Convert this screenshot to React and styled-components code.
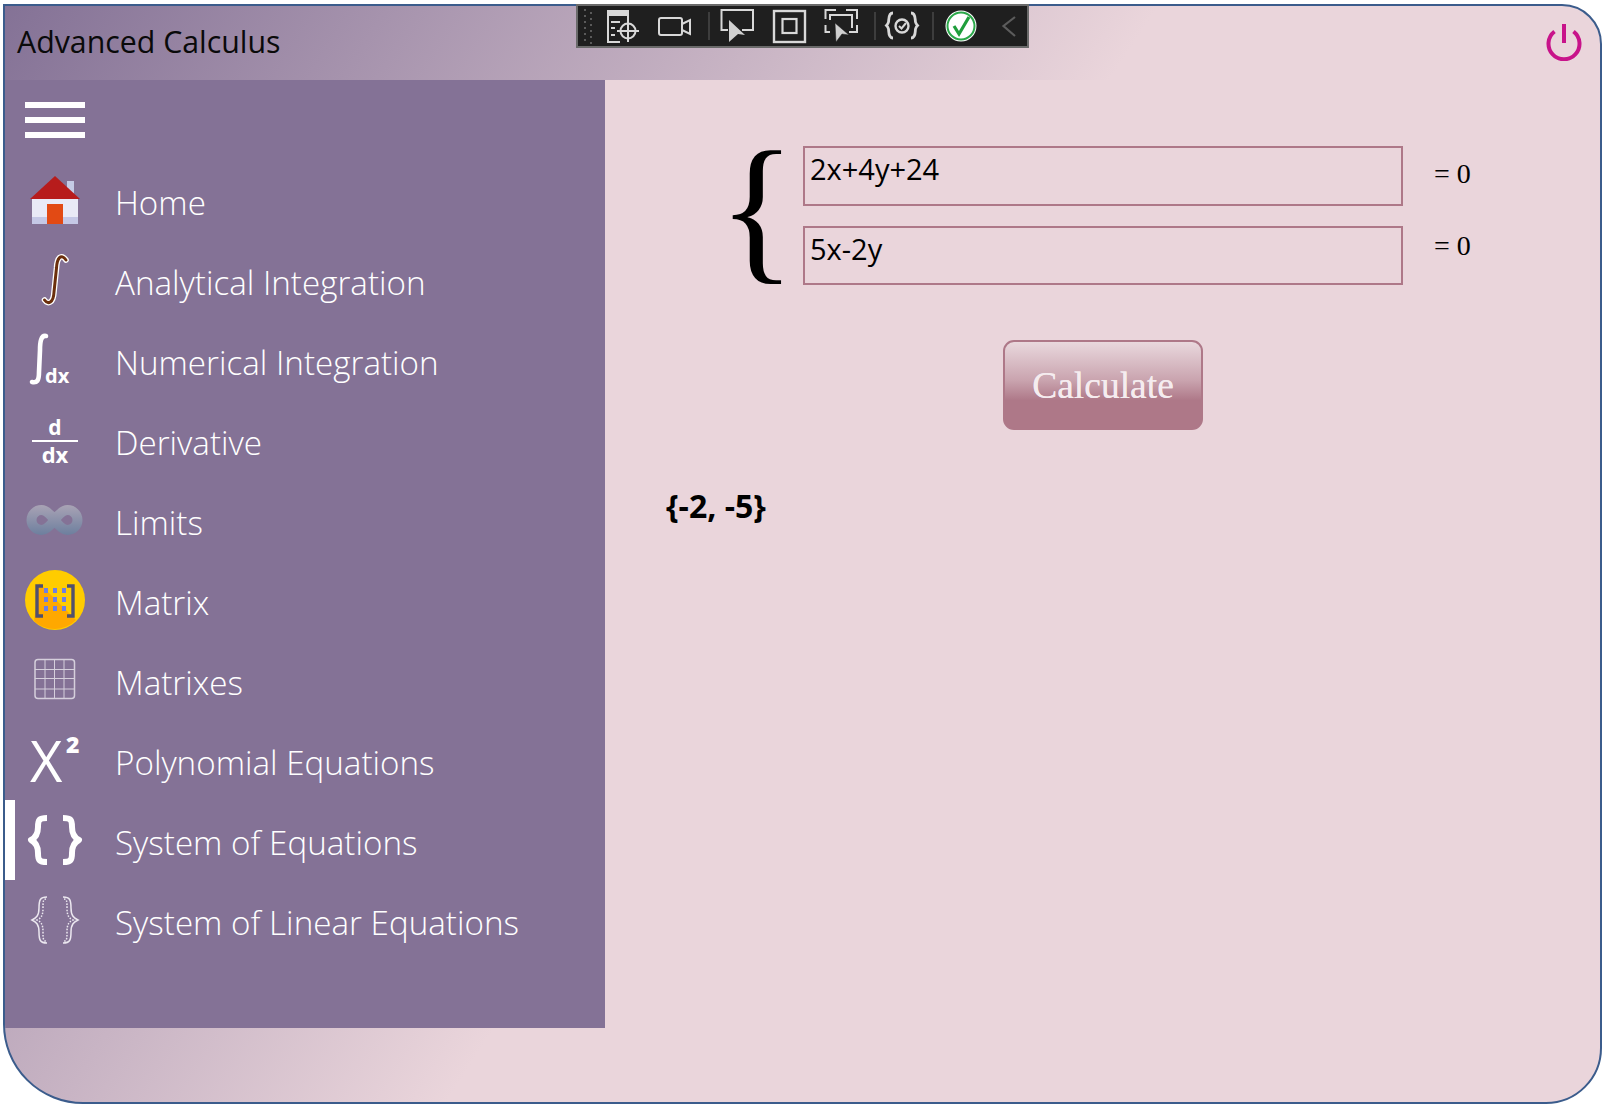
import React from "react";
import styled, { createGlobalStyle } from "styled-components";

const Global = createGlobalStyle`
  html, body {
    margin: 0;
    padding: 0;
    background: #ffffff;
  }
  body {
    font-family: "Open Sans", "Noto Sans", sans-serif;
  }
`;

const Page = styled.div`
  width: 1605px;
  height: 1105px;
  padding: 4px 3px 0 3px;
  box-sizing: border-box;
  position: relative;
  overflow: hidden;
`;

const Window = styled.div`
  width: 1599px;
  height: 1100px;
  box-sizing: border-box;
  border: 2px solid #3b5c8c;
  border-radius: 0 40px 56px 80px;
  background: linear-gradient(123deg, #847296 0%, #ead5db 50%, #ead5db 100%);
  display: flex;
  flex-direction: column;
  overflow: hidden;
`;

const TitleBar = styled.div`
  height: 74px;
  flex-shrink: 0;
  display: flex;
  align-items: center;
  justify-content: space-between;
  padding: 0 17px 0 12px;
`;

const Title = styled.div`
  font-size: 30.3px;
  color: #0a0a0a;
  margin-bottom: 4px;
`;

const PowerWrap = styled.div`
  margin-bottom: 2px;
  svg {
    display: block;
  }
`;

const Body = styled.div`
  display: flex;
  height: 948px;
`;

const Sidebar = styled.nav`
  width: 600px;
  flex-shrink: 0;
  background: #847296;
  display: flex;
  flex-direction: column;
`;

const Hamburger = styled.div`
  height: 80px;
  padding: 22px 0 0 20px;
  box-sizing: border-box;
  display: flex;
  flex-direction: column;
  gap: 9px;
`;

const HamburgerBar = styled.span`
  display: block;
  width: 60px;
  height: 6px;
  background: #ffffff;
`;

const MenuRow = styled.div`
  height: 80px;
  display: flex;
  align-items: center;
  border-left: 10px solid ${(p) => (p.$active ? "#ffffff" : "transparent")};
  box-sizing: border-box;
  padding-left: 10px;
`;

const IconBox = styled.div`
  width: 60px;
  height: 60px;
  flex-shrink: 0;
  margin-right: 30px;
  svg {
    display: block;
    overflow: visible;
  }
`;

const MenuLabel = styled.span`
  font-size: 33.2px;
  font-weight: 300;
  color: #ffffff;
  white-space: nowrap;
  position: relative;
  top: 2px;
`;

const Content = styled.main`
  flex: 1;
  background: #ead5db;
  padding: 66px 0 0 61px;
`;

const SystemRow = styled.div`
  display: flex;
  margin-left: 52px;
  height: 139px;
`;

const BigBrace = styled.div`
  width: 85px;
  font-family: "Liberation Serif", serif;
  font-size: 162px;
  line-height: 123px;
  color: #000000;
`;

const Fields = styled.div`
  display: flex;
  flex-direction: column;
  gap: 20px;
`;

const Field = styled.div`
  width: 600px;
  height: 60px;
  box-sizing: border-box;
  border: 2px solid #ae7888;
  padding: 0 5px;
  font-size: 29px;
  line-height: 41px;
  color: #000000;
`;

const Equals = styled.div`
  display: flex;
  flex-direction: column;
  gap: 36px;
  margin: 10px 0 0 31px;
`;

const EqualsText = styled.div`
  font-family: "Liberation Serif", serif;
  font-size: 28px;
  line-height: 36px;
  color: #000000;
`;

const ButtonRow = styled.div`
  display: flex;
  margin: 55px 0 0 337px;
`;

const CalcButton = styled.button`
  width: 200px;
  height: 90px;
  box-sizing: border-box;
  border: 2px solid #ae7888;
  border-radius: 11px;
  background: linear-gradient(180deg, #e9d8dd 0%, #c9a3ae 45%, #ae7888 68%, #ae7888 100%);
  color: #f5ecef;
  font-family: "Liberation Serif", serif;
  font-size: 37.5px;
  text-shadow: 0 0 0.6px #f5ecef;
  padding: 0;
`;

const Result = styled.div`
  margin-top: 54px;
  font-size: 32px;
  font-weight: 700;
  color: #000000;
`;

const DebugBar = styled.div`
  position: absolute;
  left: 576px;
  top: 4px;
  width: 453px;
  height: 44px;
  box-sizing: border-box;
  background: #1f1f1f;
  border: 2px solid #6a6a6a;
  display: flex;
  align-items: center;
`;

const PowerIcon = () => (
  <svg width="38" height="38" viewBox="0 0 38 38" fill="none" stroke="#c8138a" strokeWidth="4">
    <path d="M9.5 8.5 A15.5 15.5 0 1 0 28.5 8.5" />
    <path d="M19 1 V20" />
  </svg>
);

const HomeIcon = () => (
  <svg width="60" height="60" viewBox="0 0 60 60">
    <rect x="42" y="11" width="7" height="16" fill="#c5cbe6" />
    <rect x="7" y="29" width="46" height="25" fill="#e9eaf6" />
    <rect x="7" y="47" width="46" height="7" fill="#c5c8e6" />
    <path d="M30 6 L55 29 H5 Z" fill="#b71c1c" />
    <rect x="22" y="34" width="16" height="20" fill="#e24a14" />
  </svg>
);

const INTEGRAL_PATH = "M41 10 C36 3 32 8 31.5 18 L29 42 C28.5 53 23 55 19.5 50";

const IntegralIcon = () => (
  <svg width="60" height="60" viewBox="0 0 60 60" fill="none" strokeLinecap="round">
    <path d={INTEGRAL_PATH} stroke="#ffffff" strokeWidth="5.6" />
    <path d={INTEGRAL_PATH} stroke="#6b2f0c" strokeWidth="3" />
  </svg>
);

const NumericIcon = () => (
  <svg width="60" height="60" viewBox="0 0 60 60" fill="none">
    <path d="M21 6 C16 5 15 12 15 20 L14 42 C14 51 12 53 7 52" stroke="#ffffff" strokeWidth="4.6" strokeLinecap="round" />
    <text x="20" y="53" fontFamily="Open Sans" fontWeight="700" fontSize="20" fill="#ffffff">
      dx
    </text>
  </svg>
);

const DerivativeIcon = () => (
  <svg width="60" height="60" viewBox="0 0 60 60">
    <text x="30" y="25" textAnchor="middle" fontFamily="Open Sans" fontWeight="700" fontSize="21" fill="#ffffff">
      d
    </text>
    <rect x="7" y="30" width="46" height="2" fill="#ffffff" />
    <text x="30" y="53" textAnchor="middle" fontFamily="Open Sans" fontWeight="700" fontSize="22" fill="#ffffff">
      dx
    </text>
  </svg>
);

const InfinityIcon = () => (
  <svg width="60" height="60" viewBox="0 0 60 60" fill="none">
    <defs>
      <linearGradient id="inf" gradientUnits="userSpaceOnUse" x1="0" y1="15" x2="0" y2="45">
        <stop offset="0" stopColor="#a9a3b5" />
        <stop offset="1" stopColor="#6d7f9e" />
      </linearGradient>
    </defs>
    <path
      d="M29.5 30 C25 24 21 20 16.5 20 A10 10 0 0 0 16.5 40 C21 40 25 36 29.5 30 C34 24 38 20 42.5 20 A10 10 0 0 1 42.5 40 C38 40 34 36 29.5 30 Z"
      stroke="url(#inf)"
      strokeWidth="10"
    />
  </svg>
);

const MatrixIcon = () => (
  <svg width="60" height="60" viewBox="0 0 60 60">
    <circle cx="30" cy="30" r="30" fill="#ffcc00" />
    <path d="M14 13 L51 50 A30 30 0 0 1 9 51 Z" fill="#ffa800" />
    <path d="M18 16 H12 V46 H18" stroke="#50506e" strokeWidth="3.4" fill="none" />
    <path d="M42 16 H48 V46 H42" stroke="#50506e" strokeWidth="3.4" fill="none" />
    {[18, 27, 36].map((y) =>
      [19, 28, 37].map((x) => <rect key={`${x}-${y}`} x={x} y={y} width="4" height="5" fill="#6f7fe0" />)
    )}
  </svg>
);

const MatrixesIcon = () => (
  <svg width="60" height="60" viewBox="0 0 60 60" fill="none" stroke="#d5cfdc" strokeWidth="1">
    <rect x="10" y="9.5" width="39.5" height="39" rx="3" strokeWidth="1.5" />
    <path d="M20 10 V48 M29.5 10 V48 M39 10 V48 M10 19.5 H49 M10 28.5 H49 M10 39 H49" />
  </svg>
);

const SquareIcon = () => (
  <svg width="60" height="60" viewBox="0 0 60 60">
    <text x="5" y="52" fontFamily="Open Sans" fontSize="56" fontWeight="500" fill="#ffffff">
      X
    </text>
    <text x="41" y="23" fontFamily="Open Sans" fontSize="23" fontWeight="800" fill="#ffffff">
      2
    </text>
  </svg>
);

const BoldBraces = () => (
  <svg width="60" height="60" viewBox="0 0 60 60" fill="none" stroke="#ffffff" strokeWidth="6" strokeLinejoin="round">
    <path d="M22 8 C14 8 13 10 13 17 C13 25 10 28 6 30 C10 32 13 35 13 43 C13 50 14 52 22 52" />
    <path d="M38 8 C46 8 47 10 47 17 C47 25 50 28 54 30 C50 32 47 35 47 43 C47 50 46 52 38 52" />
  </svg>
);

const ThinBraces = () => (
  <svg width="60" height="60" viewBox="0 0 60 60" fill="none" stroke="#ece8f0" strokeWidth="1.5">
    <path d="M22 7 C15 7 14 10 14 18 C14 26 11 28 7 30 C11 32 14 34 14 42 C14 50 15 53 22 53" />
    <path d="M38 7 C45 7 46 10 46 18 C46 26 49 28 53 30 C49 32 46 34 46 42 C46 50 45 53 38 53" />
    <path d="M21 9 C18 9 18 12 18 18 C18 26 16 28 12 30 C16 32 18 34 18 42 C18 48 18 51 21 51" strokeDasharray="1.5 1.5" />
    <path d="M39 9 C42 9 42 12 42 18 C42 26 44 28 48 30 C44 32 42 34 42 42 C42 48 42 51 39 51" strokeDasharray="1.5 1.5" />
  </svg>
);

const ToolbarIcons = () => (
  <svg width="449" height="40" viewBox="0 0 449 40" fill="none" stroke="#d8d8d8" strokeWidth="2">
    {/* grip */}
    {[3, 9, 15, 21, 27, 33].map((y) => (
      <g key={y} fill="#5a5a5a" stroke="none">
        <rect x="6" y={y} width="2" height="2" />
        <rect x="12" y={y + 3} width="2" height="2" />
      </g>
    ))}
    {/* live visual tree */}
    <rect x="29" y="4" width="22" height="6" fill="#d8d8d8" stroke="none" />
    <path d="M30 9 V36 H42 M50 9 V15" />
    <path d="M33 16 H42 M33 22 H37 M33 29 H37" />
    <circle cx="50" cy="25" r="7.5" />
    <path d="M50 14 V36 M39 25 H61" />
    {/* camera */}
    <rect x="81" y="12" width="23" height="17" rx="2" />
    <path d="M104 18 L112 14 V28 L104 24" />
    <rect x="130" y="6" width="2" height="28" fill="#3d3d3d" stroke="none" />
    {/* select element */}
    <path d="M150 24 H143.5 V4 H175 V24 H164" />
    <path d="M151 14 L167 29 L160 28 L151 36 Z" fill="#d0d0d0" stroke="none" />
    {/* layout adorners */}
    <rect x="196" y="5" width="31" height="31" strokeWidth="2.4" />
    <rect x="204.5" y="13" width="14" height="14" strokeWidth="2.2" />
    {/* track focus */}
    <path d="M247.5 13 V4 H258 M268 4 H279 V13 M247.5 19 V26 H252 M279 19 V26 H271" />
    <path d="M252 14 V9 H274 V22" />
    <path d="M257 17 L271 29 L264 28 L258 36 Z" fill="#d0d0d0" stroke="#1f1f1f" strokeWidth="0.5" />
    <rect x="296" y="6" width="2" height="28" fill="#3d3d3d" stroke="none" />
    {/* binding check */}
    <path d="M315 7 C310 7 311 14 310.5 16 C310 18 308.5 19.5 308.5 19.5 C308.5 19.5 310 21 310.5 23 C311 26 310 32 315 32" strokeWidth="2.8" />
    <path d="M333 7 C338 7 337 14 337.5 16 C338 18 339.5 19.5 339.5 19.5 C339.5 19.5 338 21 337.5 23 C337 26 338 32 333 32" strokeWidth="2.8" />
    <circle cx="324" cy="20" r="6.5" strokeWidth="2.4" />
    <path d="M321 20 L323.5 22.5 L328 17" strokeWidth="2" />
    <rect x="354" y="6" width="2" height="28" fill="#3d3d3d" stroke="none" />
    {/* status */}
    <circle cx="383" cy="20" r="15.5" fill="#ffffff" stroke="none" />
    <circle cx="383" cy="20" r="13.5" fill="#ffffff" stroke="#2ba84a" strokeWidth="2" />
    <path d="M376 20 L381 28 L391 11" stroke="#1f9e3c" strokeWidth="3.2" />
    {/* collapse */}
    <path d="M437 11 L425.5 20 L437 30" stroke="#5c5c5c" strokeWidth="2.2" />
  </svg>
);

const MENU = [
  { label: "Home", icon: <HomeIcon /> },
  { label: "Analytical Integration", icon: <IntegralIcon /> },
  { label: "Numerical Integration", icon: <NumericIcon /> },
  { label: "Derivative", icon: <DerivativeIcon /> },
  { label: "Limits", icon: <InfinityIcon /> },
  { label: "Matrix", icon: <MatrixIcon /> },
  { label: "Matrixes", icon: <MatrixesIcon /> },
  { label: "Polynomial Equations", icon: <SquareIcon /> },
  { label: "System of Equations", icon: <BoldBraces />, active: true },
  { label: "System of Linear Equations", icon: <ThinBraces /> },
];

export default function App() {
  return (
    <Page>
      <Global />
      <Window>
        <TitleBar>
          <Title>Advanced Calculus</Title>
          <PowerWrap>
            <PowerIcon />
          </PowerWrap>
        </TitleBar>
        <Body>
          <Sidebar>
            <Hamburger>
              <HamburgerBar />
              <HamburgerBar />
              <HamburgerBar />
            </Hamburger>
            {MENU.map((item) => (
              <MenuRow key={item.label} $active={item.active}>
                <IconBox>{item.icon}</IconBox>
                <MenuLabel>{item.label}</MenuLabel>
              </MenuRow>
            ))}
          </Sidebar>
          <Content>
            <SystemRow>
              <BigBrace>{"{"}</BigBrace>
              <Fields>
                <Field>2x+4y+24</Field>
                <Field>5x-2y</Field>
              </Fields>
              <Equals>
                <EqualsText>= 0</EqualsText>
                <EqualsText>= 0</EqualsText>
              </Equals>
            </SystemRow>
            <ButtonRow>
              <CalcButton>Calculate</CalcButton>
            </ButtonRow>
            <Result>{"{-2, -5}"}</Result>
          </Content>
        </Body>
      </Window>
      <DebugBar>
        <ToolbarIcons />
      </DebugBar>
    </Page>
  );
}
